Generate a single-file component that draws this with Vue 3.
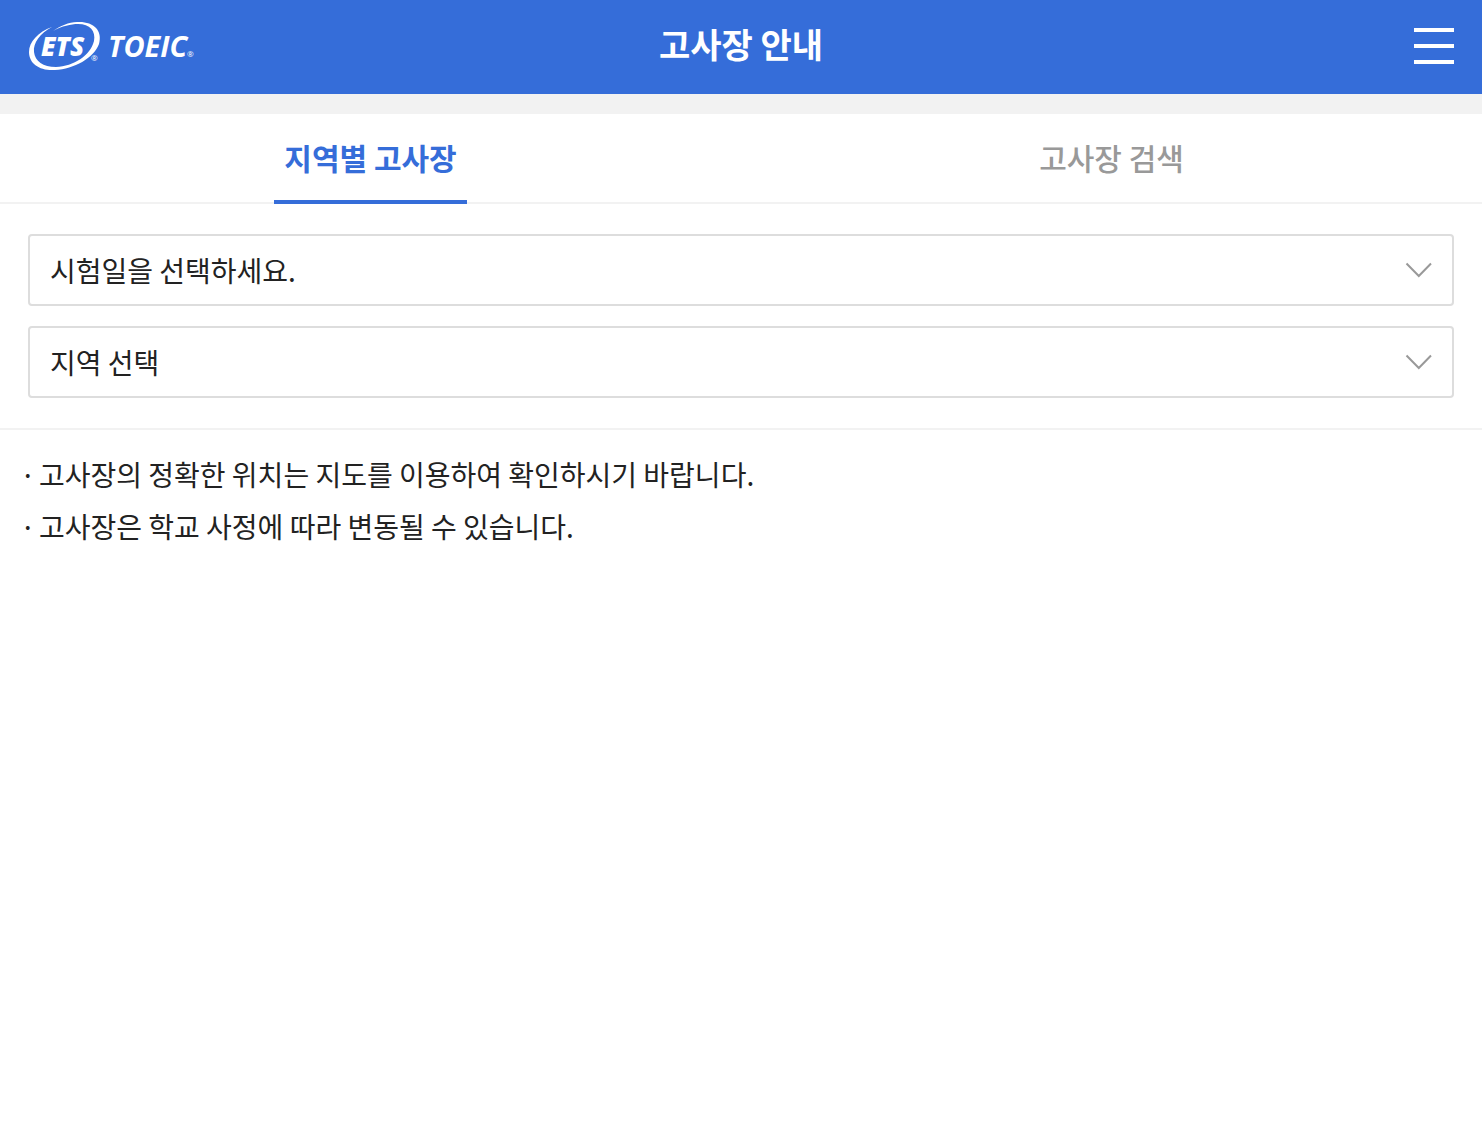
<script setup>
import { ref } from 'vue'

const tabs = ['지역별 고사장', '고사장 검색']
const activeTab = ref(0)
const filters = ['시험일을 선택하세요.', '지역 선택']
const notices = [
  '고사장의 정확한 위치는 지도를 이용하여 확인하시기 바랍니다.',
  '고사장은 학교 사정에 따라 변동될 수 있습니다.',
]
</script>

<template>
  <div class="page">
    <header class="header">
      <a href="#" class="logo" aria-label="ETS TOEIC">
        <svg width="168" height="52" viewBox="0 0 168 52" fill="#fff">
          <path d="M24 7C10 12 1 22 1 32C1 44 12 51 27 50C46 49 66 38 71 24C75 10 65 1 49 2C41 2 32 6 25 11C34 6 43 4 50 4C62 4 68 11 66 21C62 36 46 46 28 47C15 47 7 41 6 32C5 23 12 13 24 7Z" />
          <text x="13" y="36" class="logo-ets">ETS</text>
          <text x="63" y="41" class="logo-mark">®</text>
          <text x="80" y="37" class="logo-toeic">TOEIC</text>
          <text x="159" y="37" class="logo-mark">®</text>
        </svg>
      </a>
      <h1 class="title">고사장 안내</h1>
      <button type="button" class="menu" aria-label="메뉴">
        <span class="bar"></span>
        <span class="bar"></span>
        <span class="bar"></span>
      </button>
    </header>

    <nav class="tabs">
      <div v-for="(tab, i) in tabs" :key="tab" class="tab-cell">
        <button type="button" class="tab" :class="{ active: activeTab === i }" @click="activeTab = i">
          {{ tab }}
        </button>
      </div>
    </nav>

    <form class="filters">
      <div v-for="label in filters" :key="label" class="field">
        <select class="select" :aria-label="label">
          <option>{{ label }}</option>
        </select>
        <svg class="chevron" width="28" height="16" viewBox="0 0 28 16" fill="none" stroke="#999" stroke-width="2">
          <path d="M1.5 1.5L13.8 14L26 1.5" />
        </svg>
      </div>
    </form>

    <ul class="notices">
      <li v-for="notice in notices" :key="notice">{{ notice }}</li>
    </ul>
  </div>
</template>

<style>
body {
  margin: 0;
  background: #fff;
}
</style>

<style scoped>
.page {
  font-family: 'Noto Sans CJK KR', sans-serif;
  font-size: 28px;
  color: #222;
}

.header {
  display: grid;
  grid-template-columns: 1fr auto 1fr;
  align-items: center;
  box-sizing: border-box;
  height: 94px;
  padding: 0 28px 2px;
  background: #356dd9;
  color: #fff;
}

.logo {
  justify-self: start;
  display: flex;
}

.logo-ets {
  font: italic 800 26px 'Open Sans', sans-serif;
}

.logo-toeic {
  font: italic 700 29px 'Open Sans', sans-serif;
}

.logo-mark {
  font: 8px 'Open Sans', sans-serif;
}

.title {
  margin: 0;
  padding-bottom: 4px;
  font-size: 34px;
  line-height: 50px;
  font-weight: 700;
}

.menu {
  justify-self: end;
  display: flex;
  flex-direction: column;
  gap: 12px;
  width: 40px;
  padding: 0;
  border: 0;
  background: none;
  cursor: pointer;
}

.bar {
  height: 4px;
  background: #fff;
}

.tabs {
  display: flex;
  box-sizing: border-box;
  height: 110px;
  border-top: 20px solid #f2f2f2;
  border-bottom: 2px solid #f2f2f2;
}

.tab-cell {
  flex: 1;
  display: flex;
  justify-content: center;
}

.tab {
  box-sizing: border-box;
  height: 90px;
  padding: 0 10px;
  border: 0;
  border-bottom: 4px solid transparent;
  background: none;
  font-family: inherit;
  font-size: 30px;
  font-weight: 500;
  color: #999;
  cursor: pointer;
}

.tab.active {
  border-color: #356dd9;
  font-weight: 700;
  color: #356dd9;
}

.filters {
  display: flex;
  flex-direction: column;
  gap: 20px;
  padding: 30px 28px;
  border-bottom: 2px solid #f2f2f2;
}

.field {
  display: grid;
  align-items: center;
}

.select,
.chevron {
  grid-area: 1 / 1;
}

.select {
  appearance: none;
  width: 100%;
  height: 72px;
  padding: 0 60px 0 20px;
  border: 2px solid #ddd;
  border-radius: 4px;
  background: #fff;
  font: inherit;
  color: inherit;
}

.chevron {
  justify-self: end;
  margin-right: 21px;
  pointer-events: none;
}

.notices {
  margin: 0;
  padding: 18px 20px;
  list-style: none;
  line-height: 52px;
}

.notices li {
  display: flex;
}

.notices li::before {
  content: '·';
  flex: 0 0 19px;
}
</style>
